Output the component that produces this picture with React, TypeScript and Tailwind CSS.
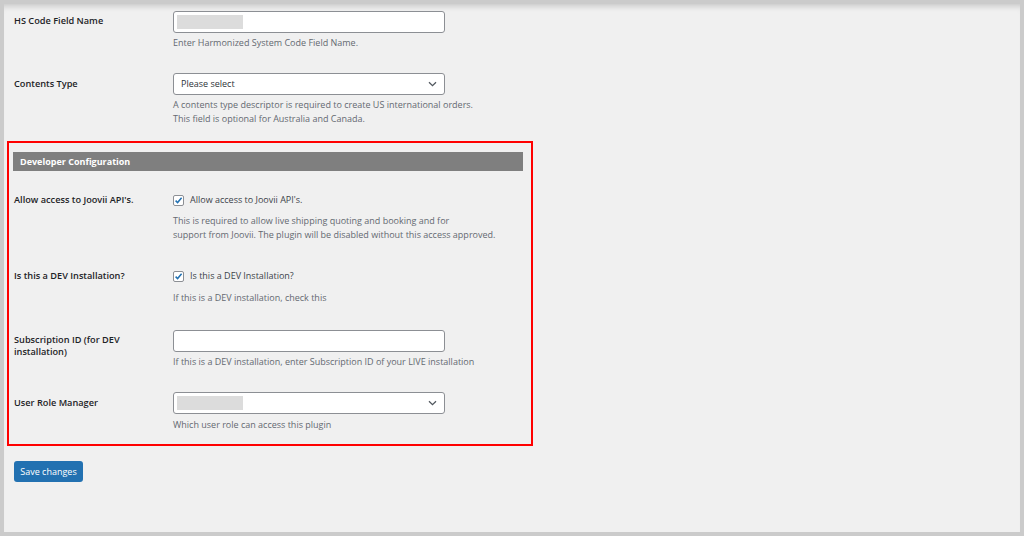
import React from "react"

const font = { fontFamily: '"Open Sans", "Noto Sans", "Liberation Sans", sans-serif' }

function Chevron() {
  return (
    <svg width="9" height="6" viewBox="0 0 9 6" className="absolute right-[7px] top-1/2 -translate-y-1/2">
      <path d="M1 1.2 L4.5 4.6 L8 1.2" fill="none" stroke="#50575e" strokeWidth="1.3" />
    </svg>
  )
}

function Field({ placeholder, select, text }: { placeholder?: boolean; select?: boolean; text?: string }) {
  return (
    <div className="relative flex h-[22px] w-[272px] items-center rounded-[3px] border border-[#8c8f94] bg-white px-[3px]">
      {placeholder && <div className="h-[14px] w-[66px] bg-[#dcdcdc]" />}
      {text && <span className="pl-[4px] text-[9px] text-[#2c3338]">{text}</span>}
      {select && <Chevron />}
    </div>
  )
}

function Checkbox({ label }: { label: string }) {
  return (
    <div className="flex h-[14px] items-center gap-[6px]">
      <div className="flex h-[11px] w-[11px] items-center justify-center rounded-[2px] border border-[#8c8f94] bg-white">
        <svg width="9" height="9" viewBox="0 0 9 9">
          <path d="M1.6 4.6 L3.6 6.6 L7.6 1.8" fill="none" stroke="#2271b1" strokeWidth="1.5" />
        </svg>
      </div>
      <span className="text-[9px] text-[#3c434a]">{label}</span>
    </div>
  )
}

function Desc({ children, mt = "mt-[3px]" }: { children: React.ReactNode; mt?: string }) {
  return <div className={`${mt} text-[9px] leading-[14px] text-[#646970]`}>{children}</div>
}

function Label({ children, pt }: { children: React.ReactNode; pt: string }) {
  return (
    <div className={`w-[159px] shrink-0 text-[9.2px] font-semibold leading-[12px] text-[#1d2327] ${pt}`}>
      {children}
    </div>
  )
}

export default function App() {
  return (
    <div className="h-[536px] w-[1024px] bg-[#cbcbcb] p-[4px]" style={font}>
      <div className="h-full bg-[#f0f0f0] pl-[3px] pt-[7px] shadow-[inset_0_7px_6px_-5px_rgba(0,0,0,0.18)]">
        {/* HS code */}
        <div className="flex pl-[7px]">
          <Label pt="pt-[4px]">HS Code Field Name</Label>
          <div>
            <Field placeholder />
            <Desc>Enter Harmonized System Code Field Name.</Desc>
          </div>
        </div>

        {/* Contents type */}
        <div className="mt-[23px] flex pl-[7px]">
          <Label pt="pt-[5px]">Contents Type</Label>
          <div>
            <Field select text="Please select" />
            <Desc>
              A contents type descriptor is required to create US international orders.
              <br />
              This field is optional for Australia and Canada.
            </Desc>
          </div>
        </div>

        {/* Developer configuration */}
        <div className="mt-[15px] w-[526px] border-2 border-[#ff0000] pb-[12px] pl-[4px] pr-[8px] pt-[9px]">
          <div className="flex h-[19px] items-center bg-[#7f7f7f] pl-[7px] text-[9px] font-bold text-white">
            Developer Configuration
          </div>

          <div className="mt-[22px] flex pl-[1px]">
            <Label pt="pt-[1px]">Allow access to Joovii API's.</Label>
            <div>
              <Checkbox label="Allow access to Joovii API's." />
              <Desc mt="mt-[7px]">
                This is required to allow live shipping quoting and booking and for
                <br />
                support from Joovii. The plugin will be disabled without this access approved.
              </Desc>
            </div>
          </div>

          <div className="mt-[27px] flex pl-[1px]">
            <Label pt="pt-[1px]">Is this a DEV Installation?</Label>
            <div>
              <Checkbox label="Is this a DEV Installation?" />
              <Desc mt="mt-[8px]">If this is a DEV installation, check this</Desc>
            </div>
          </div>

          <div className="mt-[25px] flex pl-[1px]">
            <Label pt="pt-[4px]">
              Subscription ID (for DEV
              <br />
              installation)
            </Label>
            <div>
              <Field />
              <Desc>If this is a DEV installation, enter Subscription ID of your LIVE installation</Desc>
            </div>
          </div>

          <div className="mt-[23px] flex pl-[1px]">
            <Label pt="pt-[5px]">User Role Manager</Label>
            <div>
              <Field placeholder select />
              <Desc mt="mt-[4px]">Which user role can access this plugin</Desc>
            </div>
          </div>
        </div>

        <div className="mt-[11px] pl-[7px]">
          <button className="h-[21px] w-[69px] rounded-[3px] bg-[#2271b1] text-[9px] text-white">
            Save changes
          </button>
        </div>
      </div>
    </div>
  )
}
